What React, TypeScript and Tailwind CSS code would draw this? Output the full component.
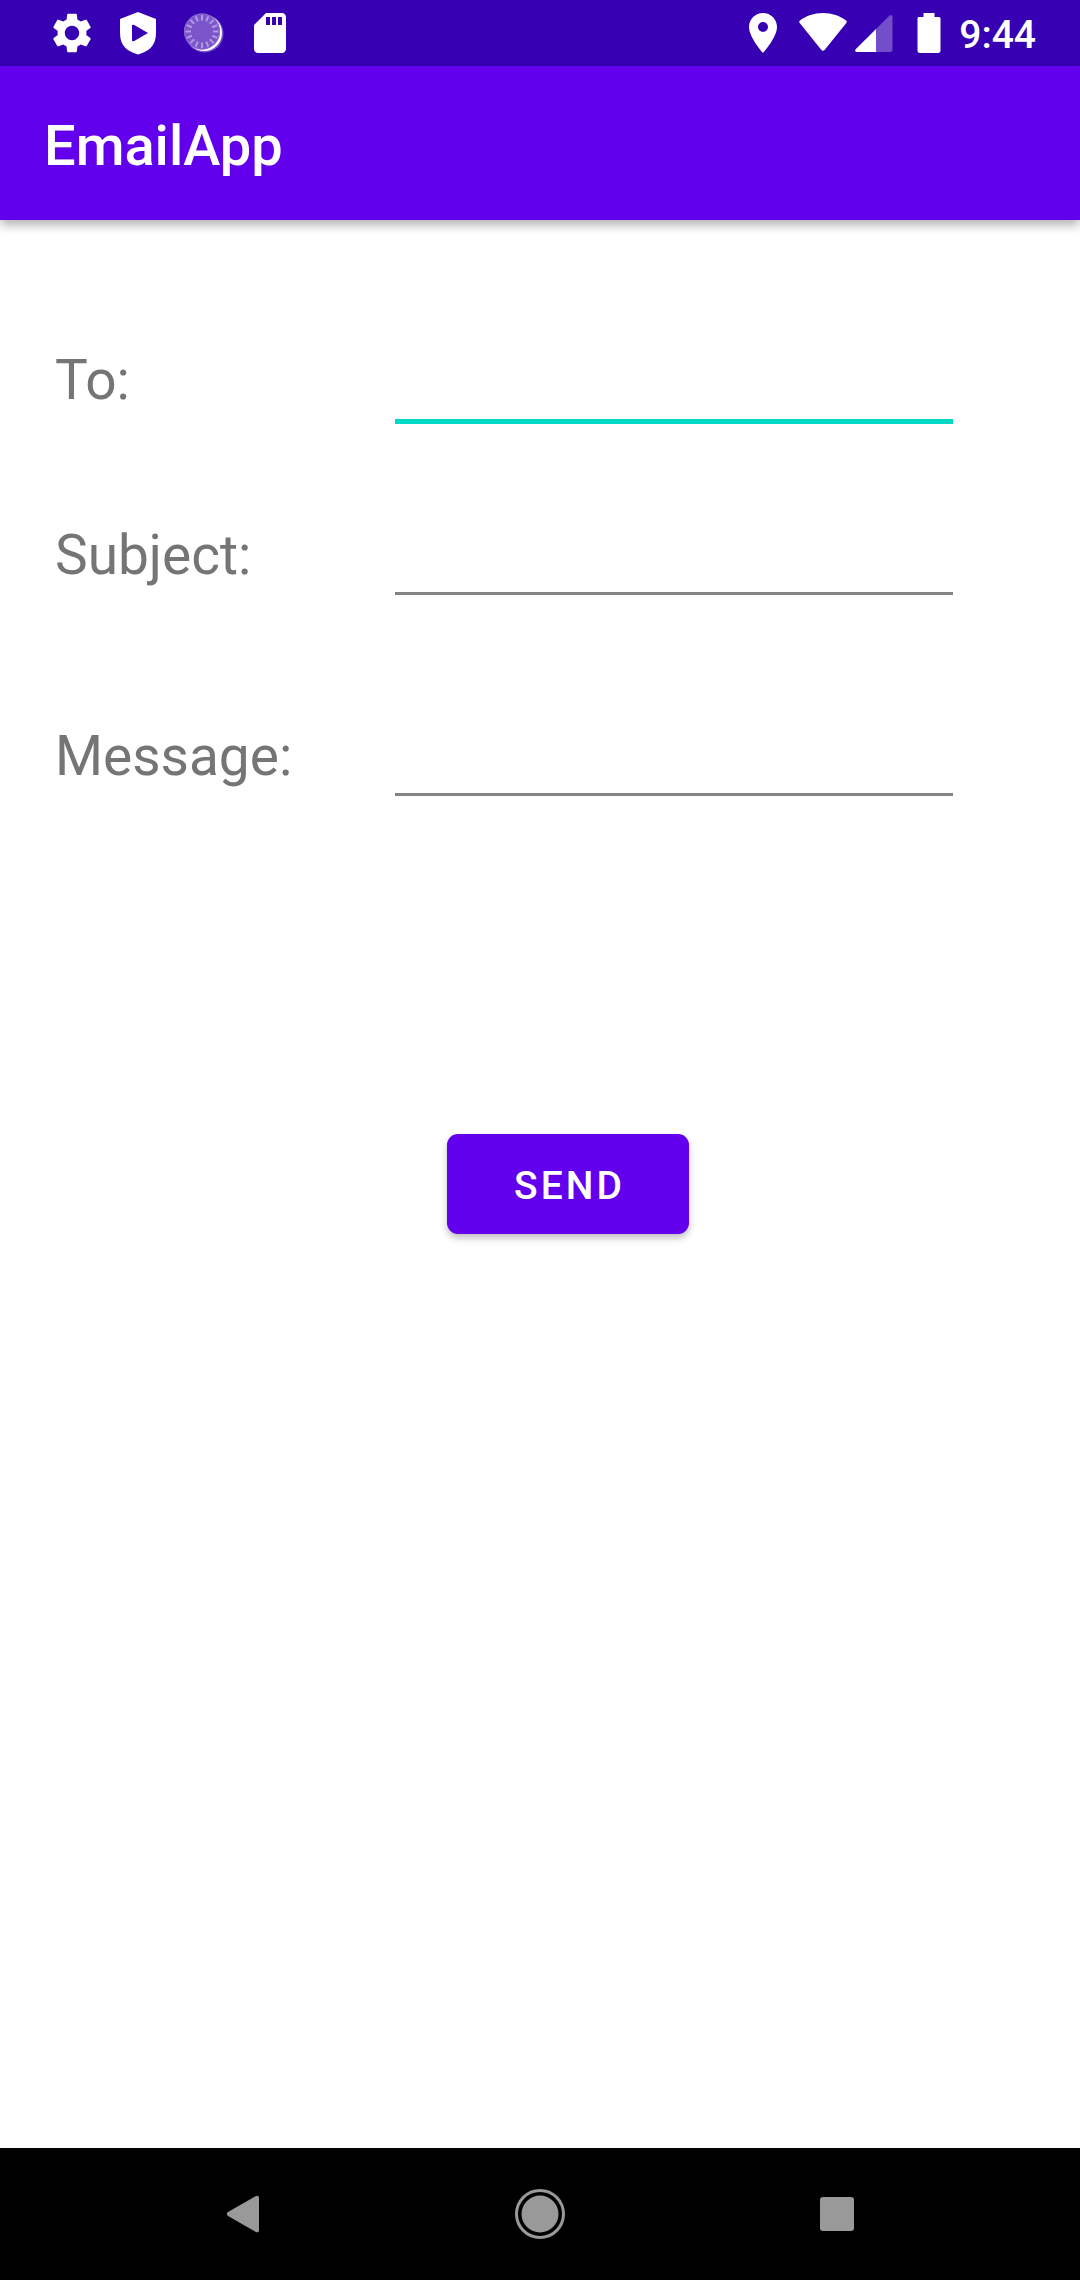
import { useState } from "react";
import { MdLocationOn, MdSdCard, MdSettings } from "react-icons/md";

const ticks = Array.from({ length: 16 }, (_, i) => i * 22.5);

function ShieldIcon() {
  return (
    <svg viewBox="0 0 48 48" className="size-12" fill="currentColor" aria-hidden="true">
      <path
        fillRule="evenodd"
        d="M24 3 6 10v14c0 13.500 8 18.500 18 21.600C34 42.500 42 37.500 42 24V10L24 3Zm-4.200 12.800L34 24 19.800 32.200C18.600 32.600 18 32 18 31V17c0-1 .6-1.600 1.800-1.200Z"
      />
    </svg>
  );
}

function SyncDiscIcon() {
  return (
    <svg viewBox="0 0 48 48" className="size-12" aria-hidden="true">
      <circle cx="24.500" cy="24.500" r="19" fill="#7c55cb" />
      <circle cx="24" cy="24" r="18" fill="#fff" />
      <circle cx="22" cy="22.500" r="18" fill="#7c55cb" />
      <circle cx="22" cy="22.500" r="17.500" fill="none" stroke="#8d6bd3" />
      {ticks.map((angle) => (
        <path
          key={angle}
          d="M22 6v5.500"
          stroke="#b09be2"
          strokeWidth="2"
          transform={`rotate(${angle} 22 22.5)`}
        />
      ))}
    </svg>
  );
}

function WifiIcon() {
  return (
    <svg viewBox="0 0 48 40" className="h-10 w-12" fill="currentColor" aria-hidden="true">
      <path d="M24 0C15 0 7 3 1 7.400c-.9.700-1 1.600-.3 2.500L22.200 36.700c1 1.300 2.600 1.300 3.600 0L47.300 9.900c.7-.9.6-1.800-.3-2.500C41 3 33 0 24 0Z" />
    </svg>
  );
}

function SignalIcon() {
  return (
    <svg viewBox="0 0 38 40" className="h-10 w-[38px]" fill="currentColor" aria-hidden="true">
      <path d="M21 16v23h14c1.600 0 2.500-.9 2.500-2.500V4c0-2-1.700-2.700-3-1.400Z" opacity=".3" />
      <path d="M21 16v23H2C.2 39-.5 37.400.7 36.200Z" />
    </svg>
  );
}

function BatteryIcon() {
  return (
    <svg viewBox="0 0 24 40" className="h-10 w-6" fill="currentColor" aria-hidden="true">
      <path d="M6.500 0h11v4h4C23 4 23.500 4.500 23.500 6v31.500c0 1.500-.7 2.500-2.500 2.500H3C1.200 40 .5 39 .5 37.500V6C.5 4.500 1 4 2.500 4h4Z" />
    </svg>
  );
}

function StatusBar() {
  return (
    <div className="flex h-[66px] items-center justify-between bg-[#3700b3] pl-12 pr-11 text-white">
      <div className="flex items-center gap-[18px]">
        <MdSettings className="size-12" aria-hidden="true" />
        <ShieldIcon />
        <SyncDiscIcon />
        <MdSdCard className="size-12" aria-hidden="true" />
      </div>
      <div className="flex items-center">
        <MdLocationOn className="mr-3 size-12" aria-hidden="true" />
        <WifiIcon />
        <span className="ml-2 flex">
          <SignalIcon />
        </span>
        <span className="ml-6 mr-[18px] flex">
          <BatteryIcon />
        </span>
        <time className="pt-1 text-[39px] font-medium leading-none">9:44</time>
      </div>
    </div>
  );
}

type FieldProps = {
  id: string;
  label: string;
  active: boolean;
  onFocus: () => void;
};

function Field({ id, label, active, onFocus }: FieldProps) {
  return (
    <div className="flex items-end">
      <label
        htmlFor={id}
        className={`w-[340px] shrink-0 text-[55px] leading-[64px] text-[#757575] ${
          active ? "pb-3" : "pb-2"
        }`}
      >
        {label}
      </label>
      <input
        id={id}
        type="text"
        onFocus={onFocus}
        className={`h-20 min-w-0 flex-1 bg-transparent text-5xl text-[#212121] outline-none ${
          active ? "border-b-[5px] border-[#03dac5]" : "border-b-[3px] border-[#848484]"
        }`}
      />
    </div>
  );
}

export default function App() {
  const [active, setActive] = useState("to");

  return (
    <div className="flex min-h-screen flex-col bg-white font-['Roboto',sans-serif]">
      <StatusBar />
      <header className="flex h-[154px] items-center bg-[#6200ee] px-11 pt-1.5 shadow-[0_5px_10px_rgba(0,0,0,0.3)]">
        <h1 className="text-[56px] font-medium leading-[64px] text-white">EmailApp</h1>
      </header>

      <main className="flex-1">
        <form className="flex flex-col pl-[55px] pt-[124px]" onSubmit={(e) => e.preventDefault()}>
          <div className="pr-[127px]">
            <Field id="to" label="To:" active={active === "to"} onFocus={() => setActive("to")} />
            <div className="mt-[91px]">
              <Field
                id="subject"
                label="Subject:"
                active={active === "subject"}
                onFocus={() => setActive("subject")}
              />
            </div>
            <div className="mt-[121px]">
              <Field
                id="message"
                label="Message:"
                active={active === "message"}
                onFocus={() => setActive("message")}
              />
            </div>
          </div>
          <button
            type="submit"
            className="mx-auto mt-[338px] h-[100px] w-[242px] rounded-[11px] bg-[#6200ee] pl-1 pt-1 text-[39px] font-medium tracking-[3px] text-white shadow-[0_4px_7px_rgba(0,0,0,0.25)]"
          >
            SEND
          </button>
        </form>
      </main>

      <nav className="flex h-[132px] justify-center bg-black text-[#999999]">
        <button type="button" aria-label="Back" className="flex w-[27.5%] items-center justify-center">
          <svg viewBox="0 0 34 38" className="h-[38px] w-[34px]" fill="currentColor">
            <path d="M29.500 1.200 2 17c-1.600 1-1.600 3 0 4l27.500 15.800C31.500 38 33 37 33 35V3c0-2-1.500-3-3.500-1.800Z" />
          </svg>
        </button>
        <button type="button" aria-label="Home" className="flex w-[27.5%] items-center justify-center">
          <svg viewBox="0 0 50 50" className="size-[50px]">
            <circle cx="25" cy="25" r="23.500" fill="none" stroke="currentColor" strokeWidth="3" />
            <circle cx="25" cy="25" r="18.500" fill="currentColor" />
          </svg>
        </button>
        <button type="button" aria-label="Recent apps" className="flex w-[27.5%] items-center justify-center">
          <span className="size-[34px] rounded-[3px] bg-[#999999]" />
        </button>
      </nav>
    </div>
  );
}
